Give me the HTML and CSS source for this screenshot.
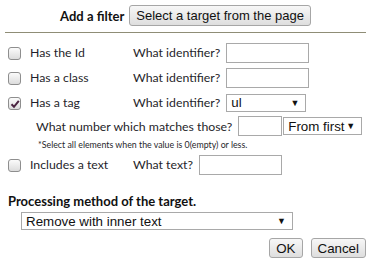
FILE: index.html
```html
<!DOCTYPE html>
<html lang="en">
<head>
    <meta charset="UTF-8">
    <title>Add a filter</title>
    <link rel="stylesheet" href="styles.css">
</head>
<body>
    <div class="header">
        <span class="title">Add a filter</span>
        <button class="btn">Select a target from the page</button>
    </div>
    <hr class="line">
    <div class="rows">
        <div class="row">
            <span class="check"></span>
            <span class="label">Has the Id</span>
            <span class="ask">What identifier?</span>
            <span class="field"></span>
        </div>
        <div class="row">
            <span class="check"></span>
            <span class="label">Has a class</span>
            <span class="ask">What identifier?</span>
            <span class="field"></span>
        </div>
        <div class="row">
            <span class="check checked">
                <svg width="10" height="10" viewBox="0 0 10 10"><path d="M1.5 5.2 L4 7.8 L8.8 1.8" fill="none" stroke="#4a2340" stroke-width="2"/></svg>
            </span>
            <span class="label">Has a tag</span>
            <span class="ask">What identifier?</span>
            <span class="select tag-select"><span>ul</span><span class="arrow">▼</span></span>
        </div>
        <div class="sub-row">
            <span class="ask">What number which matches those?</span>
            <span class="field num"></span>
            <span class="select order"><span>From first</span><span class="arrow">▼</span></span>
        </div>
        <div class="note">*Select all elements when the value is 0(empty) or less.</div>
        <div class="row">
            <span class="check"></span>
            <span class="label">Includes a text</span>
            <span class="ask">What text?</span>
            <span class="field"></span>
        </div>
    </div>
    <div class="section">Processing method of the target.</div>
    <div class="select method"><span>Remove with inner text</span><span class="arrow">▼</span></div>
    <div class="actions">
        <button class="btn">OK</button>
        <button class="btn">Cancel</button>
    </div>
</body>
</html>
```

FILE: styles.css
```css
body {
    margin: 0;
    padding: 0 5px;
    font-family: Lato, sans-serif;
    font-size: 13px;
    color: #1f1f2b;
    background: #fff;
    white-space: nowrap;
}
.header {
    display: flex;
    justify-content: center;
    align-items: center;
    gap: 5px;
    padding-top: 5px;
}
.title {
    font-weight: bold;
    color: #111;
}
.btn {
    font-family: "Liberation Sans", sans-serif;
    font-size: 13px;
    color: #111;
    height: 21px;
    padding: 0 6px;
    border: 1px solid #a6a6a6;
    border-radius: 3px;
    background: linear-gradient(#f7f7f7, #dedede);
}
.line {
    border: none;
    border-top: 1px solid #8f8d76;
    margin: 6px 0 0;
}
.rows {
    padding-top: 7px;
    font-size: 12.3px;
}
.row {
    display: flex;
    align-items: center;
    height: 25px;
    padding-left: 3px;
}
.check {
    flex-shrink: 0;
    width: 11px;
    height: 11px;
    margin-top: 2px;
    border: 1px solid #8e8e8e;
    border-radius: 3px;
    background: linear-gradient(#fbfbfb, #dcdcdc);
    display: flex;
    align-items: center;
    justify-content: center;
}
.label {
    flex-shrink: 0;
    width: 103px;
    margin-left: 9px;
}
.ask {
    flex-shrink: 0;
    margin-right: 6px;
}
.field {
    flex-shrink: 0;
    width: 81px;
    height: 18px;
    border: 1px solid #a9a9a9;
    background: #fff;
}
.select {
    flex-shrink: 0;
    display: flex;
    align-items: center;
    justify-content: space-between;
    box-sizing: border-box;
    border: 1px solid #a9a9a9;
    background: #fff;
    padding: 0 6px 0 4px;
    font-family: "Liberation Sans", sans-serif;
    font-size: 13.33px;
    color: #111;
}
.arrow {
    font-size: 9px;
}
.tag-select {
    width: 80px;
    height: 18px;
}
.sub-row {
    display: flex;
    align-items: center;
    height: 22px;
    padding-left: 31px;
}
.num {
    width: 42px;
    margin-right: 1px;
}
.order {
    width: 79px;
    height: 18px;
}
.note {
    font-size: 8.8px;
    padding-left: 33px;
    height: 15px;
    line-height: 15px;
}
.section {
    font-weight: bold;
    color: #111;
    margin: 16px 0 0 3px;
}
.method {
    width: 272px;
    height: 18px;
    margin: 3px 0 0 16px;
}
.actions {
    display: flex;
    justify-content: flex-end;
    gap: 8px;
    margin-top: 8px;
}
.actions .btn {
    height: 20px;
    font-size: 13.33px;
}
```
